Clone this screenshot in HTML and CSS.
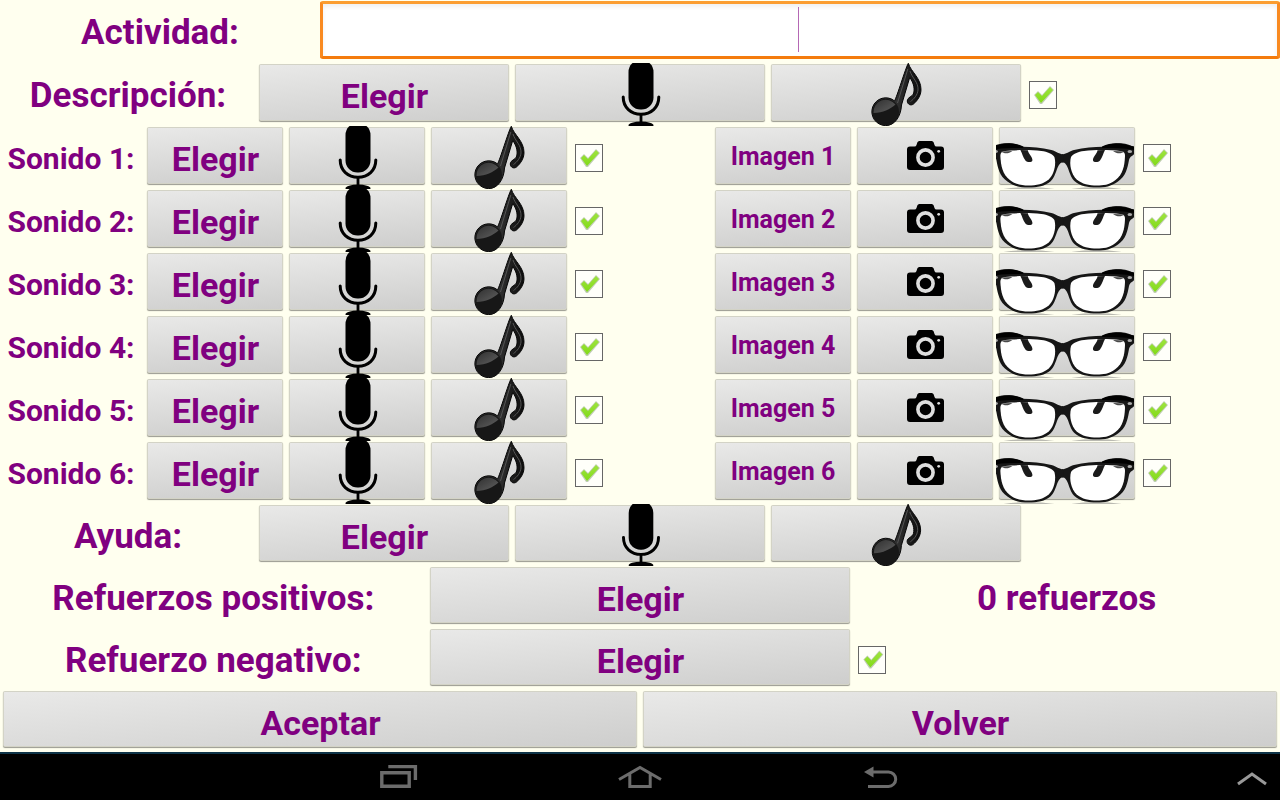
FILE: index.html
```html
<!DOCTYPE html>
<html lang="es">
<head>
<meta charset="utf-8">
<title>Actividad</title>
<link rel="stylesheet" href="styles.css">
</head>
<body>
<svg class="defs" aria-hidden="true">
  <defs>
    <linearGradient id="stem" x1="0" y1="0" x2="1" y2="0">
      <stop offset="0" stop-color="#333"/><stop offset=".5" stop-color="#303030"/><stop offset="1" stop-color="#0c0c0c"/>
    </linearGradient>
    <linearGradient id="shine" x1="0" y1="0" x2="1" y2="1">
      <stop offset="0" stop-color="#303030"/><stop offset="1" stop-color="#606060"/>
    </linearGradient>
    <symbol id="mic" viewBox="0 0 40 63">
      <rect x="7.5" y="-3" width="25" height="49.5" rx="12"/>
      <path d="M2.200 34C2.200 44.500 10 51.200 20 51.200S37.800 44.500 37.800 34" fill="none" stroke="#000" stroke-width="3" stroke-linecap="round"/>
      <path d="M18.600 51h2.800v9h-2.800z"/>
      <ellipse cx="20" cy="62.200" rx="12.500" ry="3.600"/>
    </symbol>
    <symbol id="note" viewBox="0 0 52 63">
      <path d="M37.300.3C40 9 50 15 50 26.500C50 33 46 38 42.500 41C40 43 36.300 41.500 36.300 38C36.300 34 41.500 34 42.700 30C44 24.500 42 19 38.700 14.500L30.500 42C30 53 24 62.600 14.700 62.600A13.900 13.900 0 1 1 23.500 37.900C26 34 34.500 5 37.300.3z" fill="url(#stem)" stroke="#050505"/>
      <circle cx="14.700" cy="49" r="13.300" fill="#171717"/>
      <path d="M2.500 50A12.300 12.300 0 0 1 24.500 41.500C19 46 12 50 2.500 50z" fill="url(#shine)"/>
      <path d="M36.800 6L26.500 40M39 8C41 15 47.500 19 47 27C46.500 32 43 36 39.500 38.500" fill="none" stroke="#555" stroke-width="1"/>
    </symbol>
    <symbol id="camera" viewBox="0 0 37 29">
      <path d="M3 5.500H7.500Q9 5.500 9.500 4L10.300 1.500Q10.800 0 12.300 0H24.700Q26.200 0 26.700 1.500L27.500 4Q28 5.500 29.500 5.500H34Q37 5.500 37 8.500V26Q37 29 34 29H3Q0 29 0 26V8.500Q0 5.500 3 5.500z"/>
      <circle cx="18.500" cy="16.500" r="7.600" fill="none" stroke="#dedede" stroke-width="3.600"/>
      <circle cx="31.700" cy="10.300" r="1.400" fill="#dedede"/>
    </symbol>
    <g id="half">
      <path d="M66 28.300C70 28.300 73 25.500 78 24C88 21.500 98 21 107 20.700C113 17.500 120 17 125 17.200C131 17.500 135 20 138 20.700V28C137 30 134 30 133 34C131.500 42 130 50 122 55.500C115 60.500 109 61.500 101 61.500C92 61.500 84 60 79 55.500C72 49.500 73 36.300 66 36.300z" fill="#161616"/>
      <path d="M106 20.500C113 17 121 16.500 127 18L138 20.500V24C128 22 118 22 106 22z" fill="#000"/>
      <path d="M75 31C76.500 28 82 25.800 88 25C100 23.600 115 24 124 25C128 25.500 129 27 129 30C128.500 40 127 48 119.500 54C113 59 107 59.500 101 59.500C93 59.500 86 58 80.700 53.500C75 48 73 38 75 31z" fill="#fff"/>
      <path d="M109 24L101.500 24.200C101 28 96.500 31 97 34.500C97.500 36.500 102 36.800 104 34.500C106.500 31 107 28 109 24z" fill="#1b1b1b"/>
      <path d="M117 25C121 28 125 28 128.500 25.500z" fill="#484848"/>
      <path d="M75 62.500Q100 60.500 126 62.500z" fill="#777"/>
      <ellipse cx="133.800" cy="25.600" rx="2.300" ry="1.500" fill="#aaa"/>
    </g>
    <symbol id="glasses" viewBox="0 0 138 63">
      <use href="#half"/>
      <use href="#half" transform="matrix(-1 0 0 1 133.400 0)"/>
    </symbol>
  </defs>
</svg>

<main class="form">
  <div class="row row-title">
    <label class="label" for="actividad">Actividad:</label>
    <div class="field"><input id="actividad" type="text"><span class="caret"></span></div>
  </div>

  <div class="row row-five">
    <span class="label">Descripción:</span>
    <button class="btn"><span>Elegir</span></button>
    <button class="btn" aria-label="Grabar"><svg class="mic"><use href="#mic"/></svg></button>
    <button class="btn" aria-label="Escuchar"><svg class="note"><use href="#note"/></svg></button>
    <input class="check" type="checkbox" checked aria-label="Descripción lista">
  </div>

  <div class="row row-nine">
    <span class="label small">Sonido 1:</span>
    <button class="btn"><span>Elegir</span></button>
    <button class="btn" aria-label="Grabar"><svg class="mic"><use href="#mic"/></svg></button>
    <button class="btn" aria-label="Escuchar"><svg class="note"><use href="#note"/></svg></button>
    <input class="check" type="checkbox" checked aria-label="Sonido 1 listo">
    <button class="btn image">Imagen 1</button>
    <button class="btn photo" aria-label="Cámara"><svg class="camera"><use href="#camera"/></svg></button>
    <button class="btn view" aria-label="Ver"><svg class="glasses"><use href="#glasses"/></svg></button>
    <input class="check" type="checkbox" checked aria-label="Imagen 1 lista">
  </div>
  <div class="row row-nine">
    <span class="label small">Sonido 2:</span>
    <button class="btn"><span>Elegir</span></button>
    <button class="btn" aria-label="Grabar"><svg class="mic"><use href="#mic"/></svg></button>
    <button class="btn" aria-label="Escuchar"><svg class="note"><use href="#note"/></svg></button>
    <input class="check" type="checkbox" checked aria-label="Sonido 2 listo">
    <button class="btn image">Imagen 2</button>
    <button class="btn photo" aria-label="Cámara"><svg class="camera"><use href="#camera"/></svg></button>
    <button class="btn view" aria-label="Ver"><svg class="glasses"><use href="#glasses"/></svg></button>
    <input class="check" type="checkbox" checked aria-label="Imagen 2 lista">
  </div>
  <div class="row row-nine">
    <span class="label small">Sonido 3:</span>
    <button class="btn"><span>Elegir</span></button>
    <button class="btn" aria-label="Grabar"><svg class="mic"><use href="#mic"/></svg></button>
    <button class="btn" aria-label="Escuchar"><svg class="note"><use href="#note"/></svg></button>
    <input class="check" type="checkbox" checked aria-label="Sonido 3 listo">
    <button class="btn image">Imagen 3</button>
    <button class="btn photo" aria-label="Cámara"><svg class="camera"><use href="#camera"/></svg></button>
    <button class="btn view" aria-label="Ver"><svg class="glasses"><use href="#glasses"/></svg></button>
    <input class="check" type="checkbox" checked aria-label="Imagen 3 lista">
  </div>
  <div class="row row-nine">
    <span class="label small">Sonido 4:</span>
    <button class="btn"><span>Elegir</span></button>
    <button class="btn" aria-label="Grabar"><svg class="mic"><use href="#mic"/></svg></button>
    <button class="btn" aria-label="Escuchar"><svg class="note"><use href="#note"/></svg></button>
    <input class="check" type="checkbox" checked aria-label="Sonido 4 listo">
    <button class="btn image">Imagen 4</button>
    <button class="btn photo" aria-label="Cámara"><svg class="camera"><use href="#camera"/></svg></button>
    <button class="btn view" aria-label="Ver"><svg class="glasses"><use href="#glasses"/></svg></button>
    <input class="check" type="checkbox" checked aria-label="Imagen 4 lista">
  </div>
  <div class="row row-nine">
    <span class="label small">Sonido 5:</span>
    <button class="btn"><span>Elegir</span></button>
    <button class="btn" aria-label="Grabar"><svg class="mic"><use href="#mic"/></svg></button>
    <button class="btn" aria-label="Escuchar"><svg class="note"><use href="#note"/></svg></button>
    <input class="check" type="checkbox" checked aria-label="Sonido 5 listo">
    <button class="btn image">Imagen 5</button>
    <button class="btn photo" aria-label="Cámara"><svg class="camera"><use href="#camera"/></svg></button>
    <button class="btn view" aria-label="Ver"><svg class="glasses"><use href="#glasses"/></svg></button>
    <input class="check" type="checkbox" checked aria-label="Imagen 5 lista">
  </div>
  <div class="row row-nine">
    <span class="label small">Sonido 6:</span>
    <button class="btn"><span>Elegir</span></button>
    <button class="btn" aria-label="Grabar"><svg class="mic"><use href="#mic"/></svg></button>
    <button class="btn" aria-label="Escuchar"><svg class="note"><use href="#note"/></svg></button>
    <input class="check" type="checkbox" checked aria-label="Sonido 6 listo">
    <button class="btn image">Imagen 6</button>
    <button class="btn photo" aria-label="Cámara"><svg class="camera"><use href="#camera"/></svg></button>
    <button class="btn view" aria-label="Ver"><svg class="glasses"><use href="#glasses"/></svg></button>
    <input class="check" type="checkbox" checked aria-label="Imagen 6 lista">
  </div>

  <div class="row row-five tight">
    <span class="label">Ayuda:</span>
    <button class="btn"><span>Elegir</span></button>
    <button class="btn" aria-label="Grabar"><svg class="mic"><use href="#mic"/></svg></button>
    <button class="btn" aria-label="Escuchar"><svg class="note"><use href="#note"/></svg></button>
  </div>
  <div class="row row-three tight">
    <span class="label">Refuerzos positivos:</span>
    <button class="btn"><span>Elegir</span></button>
    <span class="label">0 refuerzos</span>
  </div>
  <div class="row row-three tight">
    <span class="label">Refuerzo negativo:</span>
    <button class="btn"><span>Elegir</span></button>
    <input class="check" type="checkbox" checked aria-label="Refuerzo negativo listo">
  </div>
  <div class="row row-two tight">
    <button class="btn"><span>Aceptar</span></button>
    <button class="btn"><span>Volver</span></button>
  </div>
</main>

<nav class="system">
  <div class="keys">
    <button aria-label="Recientes"><svg width="38" height="24" viewBox="0 0 38 24"><path d="M1.800 7.800H29.200V21.200H1.800zM8.300 1.600H35.400V15" stroke-width="3.400"/></svg></button>
    <button aria-label="Inicio"><svg width="44" height="24" viewBox="0 0 44 24"><path d="M1 14.500L22 2.500L43 14.500M11.800 9V21.500H32.200V9" stroke-width="3"/></svg></button>
    <button aria-label="Atrás"><svg width="34" height="24" viewBox="0 0 34 24"><path d="M8 7H24.500A7.200 7.200 0 0 1 24.500 21.400H4" stroke-width="3"/><path class="solid" d="M0 7L9.500 1.500V12.500z"/></svg></button>
  </div>
  <button class="up" aria-label="Más"><svg width="30" height="14" viewBox="0 0 30 14"><path d="M1 12L15 2L29 12" stroke-width="3"/></svg></button>
</nav>
</body>
</html>
```
FILE: styles.css
```css
* { box-sizing: border-box; }

body {
  margin: 0;
  min-height: 100vh;
  display: flex;
  flex-direction: column;
  background: #ffffef;
  color: #800080;
  font-family: Roboto, "Noto Sans", sans-serif;
  font-weight: 700;
  font-size: 35px;
}

.defs { position: absolute; width: 0; height: 0; }

button { font: inherit; color: inherit; border: 0; padding: 0; background: none; }

.form {
  flex: 1;
  display: grid;
  grid-template-rows: repeat(8, 63fr) repeat(4, 62fr);
}

.row { display: grid; min-height: 0; }
.row-title { grid-template-columns: 1fr 3fr; }
.row-five { grid-template-columns: repeat(5, 1fr); }
.row-nine { grid-template-columns: 144fr repeat(8, 142fr); }
.row-three { grid-template-columns: repeat(3, 1fr); }
.row-two { grid-template-columns: repeat(2, 1fr); }

.label {
  display: flex;
  align-items: center;
  justify-content: center;
  white-space: nowrap;
  line-height: 42px;
  padding-top: 3px;
}
.label.small { font-size: 30px; padding-right: 2px; }

.btn {
  position: relative;
  display: flex;
  align-items: center;
  justify-content: center;
  min-width: 0;
  overflow: hidden;
  font-size: 34px;
  line-height: 42px;
}
.btn::before {
  content: "";
  position: absolute;
  inset: 2px 4px 6px;
  border-radius: 1px;
  background: linear-gradient(175deg, #e9e9e8, #cececd);
  box-shadow: 0 0 0 1px #d3d3c6, 0 1px 1px 1px #99998f;
}
.btn span { position: relative; padding: 3px 0 0 1px; }
.btn svg { position: relative; flex: none; }
.btn.image { font-size: 25px; isolation: isolate; padding-bottom: 2px; }
.btn.image::before { z-index: -1; }
.btn.photo { padding-bottom: 4px; }
.btn.view { justify-content: flex-start; }

.mic { width: 40px; height: 63px; margin-left: 1px; }
.note { width: 52px; height: 63px; margin-left: 2px; }
.tight .mic, .tight .note { height: 62px; }
.camera { width: 37px; height: 29px; }
.glasses { width: 138px; height: 63px; }

.field { position: relative; padding: 1px 0 4px; }
.field input {
  display: block;
  width: 100%;
  height: 100%;
  border: 3px solid #f9861a;
  border-color: #fb9d30 #f98a20 #f47b0c;
  border-radius: 3px;
  background: #fff;
  box-shadow: inset 0 3px 4px #f0f0f0;
  font: inherit;
  color: inherit;
  text-align: center;
  outline: 0;
}
.caret {
  position: absolute;
  left: 50%;
  top: 7px;
  bottom: 11px;
  width: 1px;
  margin-left: -2px;
  background: #b568b5;
}

.check {
  appearance: none;
  position: relative;
  align-self: center;
  width: 28px;
  height: 28px;
  margin: 1px 0 0 5px;
  border: 1px solid #666;
  background: #fffffa;
}
.check::before,
.check::after {
  content: "";
  position: absolute;
  inset: 0;
}
.check:checked::before {
  background: #c2cdb8;
  clip-path: polygon(4px 13px, 8px 9px, 12px 13px, 20px 4px, 24px 8px, 12px 22px, 10px 22px);
}
.check:checked::after {
  background: linear-gradient(#a8e64c, #78d80c);
  clip-path: polygon(5px 13px, 8px 10px, 12px 14px, 20px 5px, 23px 8px, 11px 21px);
}

.system {
  height: 48px;
  display: grid;
  grid-template-columns: 1fr auto 1fr;
  align-items: center;
  background: #000;
  border-top: 2px solid #0d3347;
}
.system svg { display: block; fill: none; stroke: #6c6c6c; }
.system .solid { fill: #6c6c6c; stroke: none; }
.keys { grid-column: 2; display: flex; }
.keys button { width: 241px; display: flex; justify-content: center; }
.up { justify-self: end; margin-right: 13px; padding-top: 4px; }
.system .up svg { stroke: #999; }
```
